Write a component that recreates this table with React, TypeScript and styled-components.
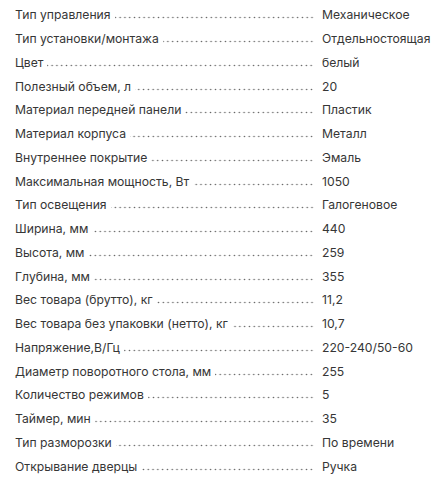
import styled, { createGlobalStyle } from "styled-components";

const GlobalStyle = createGlobalStyle`
    html, body {
        margin: 0;
        padding: 0;
        background: #fff;
    }
`

type Spec = [string, string];

const specs: Spec[] = [
    ["Тип управления", "Механическое"],
    ["Тип установки/монтажа", "Отдельностоящая"],
    ["Цвет", "белый"],
    ["Полезный объем, л", "20"],
    ["Материал передней панели", "Пластик"],
    ["Материал корпуса", "Металл"],
    ["Внутреннее покрытие", "Эмаль"],
    ["Максимальная мощность, Вт", "1050"],
    ["Тип освещения", "Галогеновое"],
    ["Ширина, мм", "440"],
    ["Высота, мм", "259"],
    ["Глубина, мм", "355"],
    ["Вес товара (брутто), кг", "11,2"],
    ["Вес товара без упаковки (нетто), кг", "10,7"],
    ["Напряжение,В/Гц", "220-240/50-60"],
    ["Диаметр поворотного стола, мм", "255"],
    ["Количество режимов", "5"],
    ["Таймер, мин", "35"],
    ["Тип разморозки", "По времени"],
    ["Открывание дверцы", "Ручка"],
];

const List = styled.dl`
    margin: 0;
    padding: 3px 0 0 15px;
    font-family: Inter, "Noto Sans", sans-serif;
    font-size: 12.2px;
    color: #363636;
`

const Row = styled.div`
    display: grid;
    grid-template-columns: 299px auto;
    column-gap: 8px;
    height: 23.75px;
    align-items: center;
`

const Name = styled.dt`
    display: flex;
    align-items: baseline;
    margin: 0;
    white-space: nowrap;
`

const Leader = styled.span`
    flex: 1;
    margin-left: 4px;
    height: 4px;
    background-image: radial-gradient(circle at center, #666 0.7px, transparent 1.05px);
    background-size: 4.8px 3px;
    background-repeat: repeat-x;
    background-position: right bottom;
`

const Value = styled.dd`
    margin: 0;
    white-space: nowrap;
`

export default function App() {
    return (
        <>
            <GlobalStyle />
            <List>
                {specs.map(([name, value]) => (
                    <Row key={name}>
                        <Name>
                            {name}
                            <Leader />
                        </Name>
                        <Value>{value}</Value>
                    </Row>
                ))}
            </List>
        </>
    );
}
